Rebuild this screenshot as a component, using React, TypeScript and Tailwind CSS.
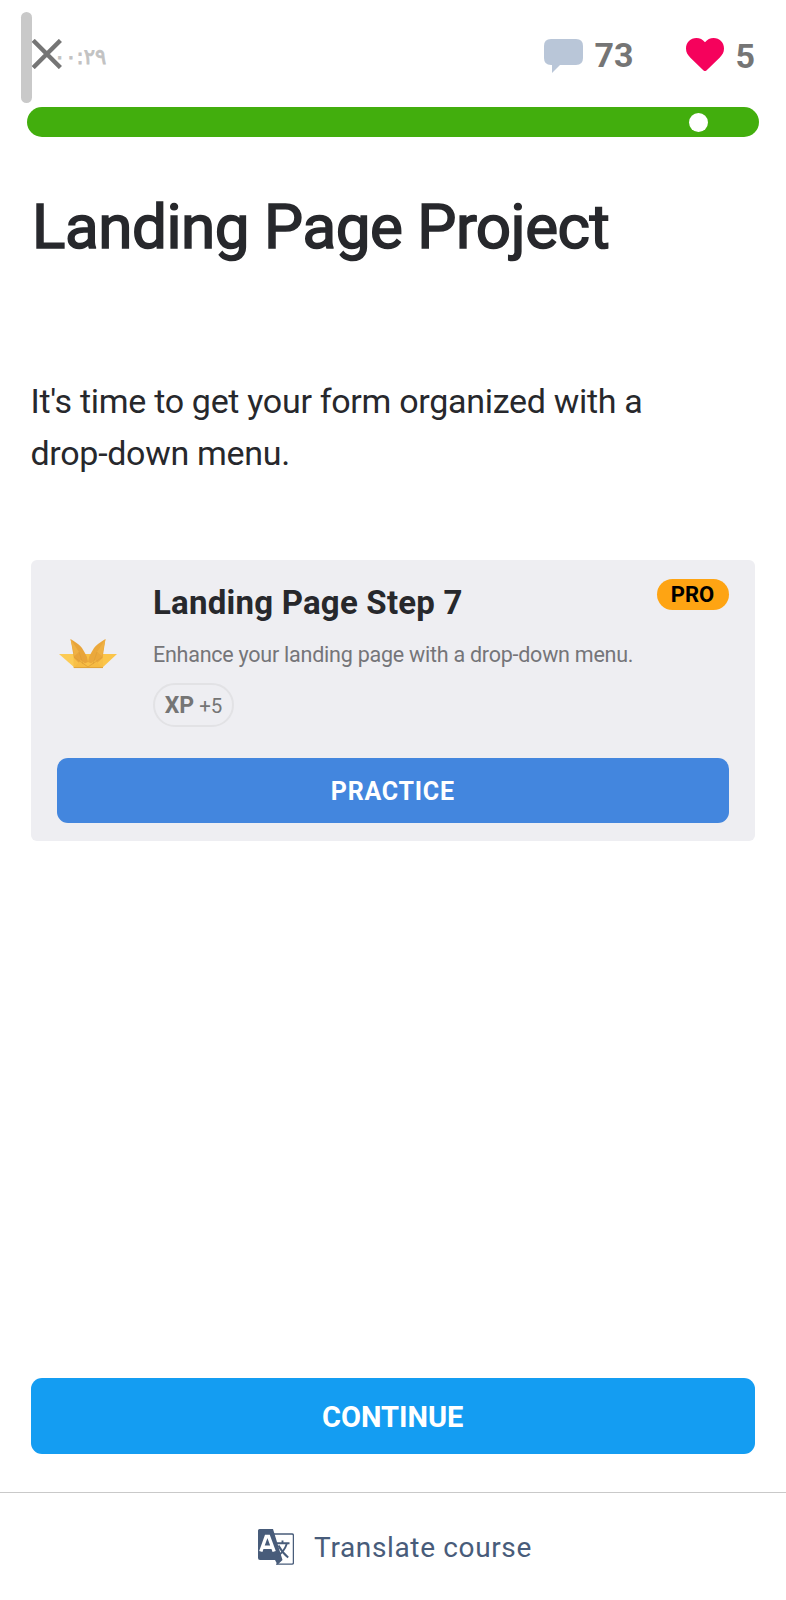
import React from "react";

function CloseIcon() {
  return (
    <svg viewBox="0 0 30 30" className="block h-[30px] w-[30px]" fill="none" stroke="#757575" strokeWidth="4.400">
      <path d="M1.200 1.400 28.400 28.600M28.400 1.400 1.200 28.600" />
    </svg>
  );
}

function BubbleIcon() {
  return (
    <svg viewBox="0 0 39 34" className="block h-[34px] w-[39px]" fill="#b9c6d8">
      <path d="M7 0H32Q39 0 39 7V19Q39 26 32 26H16L8 34V26H7Q0 26 0 19V7Q0 0 7 0Z" />
    </svg>
  );
}

function HeartIcon() {
  return (
    <svg viewBox="0 0 38 33" className="block h-[33px] w-[38px]" fill="#f5025c">
      <path d="M19 4.2C16.800 1.500 13.800 0 10.400 0 4.500 0 0 4.600 0 10.500 0 14.300 1.600 16.900 4.400 19.700L17.300 32.300Q19 33.800 20.700 32.300L33.600 19.700C36.400 16.900 38 14.300 38 10.500 38 4.600 33.500 0 27.600 0 24.200 0 21.200 1.500 19 4.200Z" />
    </svg>
  );
}

function OrigamiIcon() {
  return (
    <svg viewBox="0 0 58 30" className="block h-[30px] w-[58px]">
      <path d="M0 15H15L16 29Z" fill="#fccb55" />
      <path d="M58 15H43L43 29Z" fill="#fbc54a" />
      <path d="M14.500 15H44V29H14.500Z" fill="#f8c047" />
      <path d="M11.500 0Q20 5 23 9Q25.500 13 28 18L29 23 22 26 15 19Z" fill="#e8a43a" />
      <path d="M46.500 0Q38 5 35 9Q32.500 13 30 18L29 23 36 26 43.500 19Z" fill="#eba83b" />
      <path d="M11.500 0 20 13 15.500 17ZM46.500 0 38 13 43 17Z" fill="#efb144" />
      <path d="M15 28.500 22 21 29 27 36 21 43.500 28.500Z" fill="#f6bb43" />
      <path d="M15 18 29 28 43.500 18M20 13 24 25M38 13 34 25" fill="none" stroke="#dd9d36" strokeWidth="0.700" />
      <path d="M15 28.600H44" stroke="#d99b35" strokeWidth="0.800" />
    </svg>
  );
}

function TranslateIcon() {
  return (
    <svg viewBox="0 0 36 36" className="block h-9 w-9">
      <path d="M16 5H34Q35.400 5 35.400 6.400V33.800Q35.400 35.200 34 35.200H18" fill="none" stroke="#485c7a" strokeWidth="1.300" />
      <path d="M1.500 0H15L24.500 31 19.500 35.700 17 31H2Q0 31 0 29V1.500Q0 0 1.500 0Z" fill="#485c7a" />
      <path d="M2.800 22.500 8.200 7.500H10.600L16.200 22.500M4.700 18.200H14.200" fill="none" stroke="#fff" strokeWidth="3.400" />
      <path d="M18.500 14.300H31.500M24.500 11.500V14.300M28.800 14.800Q26.500 22 19.500 27.500M20.500 16.500Q24 23.500 30.200 28.500" fill="none" stroke="#485c7a" strokeWidth="1.900" />
    </svg>
  );
}

export default function App() {
  return (
    <div className="flex h-[1600px] w-[786px] flex-col overflow-hidden bg-white font-['Roboto',sans-serif] text-[#27282c]">
      <header className="flex h-[107px] items-start pl-[21px] pr-[31px]">
        <div className="mt-3 h-[91px] w-[11px] rounded-full bg-[#c9c9c9]" />
        <button className="relative mt-[39px]" aria-label="Close">
          <span dir="ltr" className="absolute left-[22px] top-[4px] font-['DejaVu_Sans',sans-serif] text-[21px] leading-[28px] text-[#c2c2c2] [-webkit-text-stroke:0.8px_#c2c2c2]">
            ۰۰:۲۹
          </span>
          <span className="relative block"><CloseIcon /></span>
        </button>
        <div className="ml-auto mt-[38px] flex items-start text-[34px] font-bold leading-[34px] text-[#757575]">
          <span className="mt-px"><BubbleIcon /></span>
          <span className="ml-[11px]">73</span>
          <span className="ml-[53px]"><HeartIcon /></span>
          <span className="ml-[11px] mt-px">5</span>
        </div>
      </header>

      <div className="mx-[27px] flex h-[30px] shrink-0 items-center justify-end rounded-full bg-[#42ae0d] pr-[51.500px]">
        <div className="h-[19px] w-[19px] rounded-full bg-white" />
      </div>

      <main className="flex flex-1 flex-col pl-[30.500px] pr-[31px]">
        <h1 className="mt-[52px] whitespace-nowrap pl-[1.500px] text-[62px] font-normal leading-[76px] tracking-[-0.470px] [-webkit-text-stroke:1.6px_#27282c]">Landing Page Project</h1>
        <p className="mt-[110px] w-[640px] text-[34px] leading-[52px] tracking-[-0.300px]">
          It's time to get your form organized with a drop-down menu.
        </p>

        <section className="mt-[81px] h-[281px] rounded-md bg-[#eeeef2] px-[26.500px] pt-[18px]">
          <div className="flex h-[180px] items-start">
            <div className="mt-[61px] w-[96px] pl-[2px]"><OrigamiIcon /></div>
            <div className="flex-1">
              <h2 className="mt-[5px] whitespace-nowrap text-[33px] font-bold leading-[40px] tracking-[0.220px]">Landing Page Step 7</h2>
              <p className="mt-[18px] whitespace-nowrap text-[21.500px] leading-[28px] tracking-[-0.240px] text-[#757579]">
                Enhance your landing page with a drop-down menu.
              </p>
              <div className="mt-[14px] flex h-[44px] w-[81px] items-center justify-center gap-[5px] rounded-full border-2 border-[#e2e2e5] pt-[2px] text-[#757575]">
                <span className="text-[23px] font-bold leading-[28px]">XP</span>
                <span className="text-[20.500px] leading-[28px]">+5</span>
              </div>
            </div>
            <span className="mt-px flex h-[31px] w-[72px] shrink-0 items-center justify-center rounded-full bg-[#fea413] text-[22px] font-bold text-black">
              PRO
            </span>
          </div>
          <button className="flex h-[65px] w-full items-center justify-center rounded-[11px] bg-[#4386de] pt-[2px] text-[25px] font-bold tracking-[0.750px] text-white">
            PRACTICE
          </button>
        </section>

        <button className="mb-[38px] mt-auto flex h-[76px] w-full items-center justify-center rounded-[11px] bg-[#149df2] pt-[3px] text-[29px] font-bold text-white">
          CONTINUE
        </button>
      </main>

      <footer className="flex h-[108px] shrink-0 items-center justify-center gap-[20px] border-t border-[#c9c9c9] pl-[4px] text-[28px] tracking-[0.640px] text-[#485c7a]">
        <TranslateIcon />
        <span className="pt-[3px]">Translate course</span>
      </footer>
    </div>
  );
}
